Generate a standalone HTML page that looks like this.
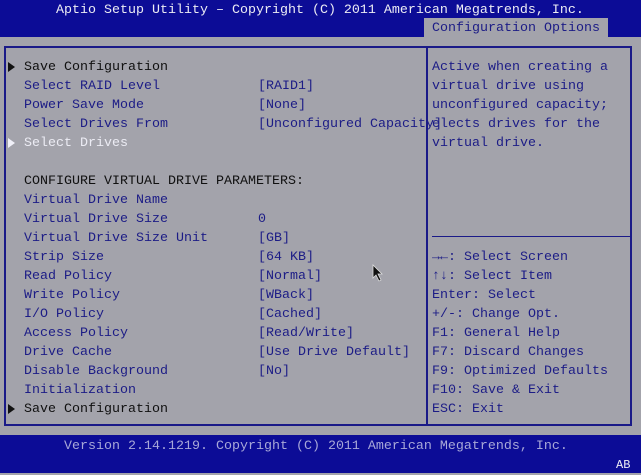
<!DOCTYPE html>
<html><head><meta charset="utf-8"><style>
html,body{margin:0;padding:0}
body{width:641px;height:473px;position:relative;overflow:hidden;background:#a3a3ab;font-family:"Liberation Mono","DejaVu Sans Mono",monospace;font-size:13.33px;}
.t{position:absolute;white-space:pre;line-height:19px;height:19px;margin-top:1px}
.b{color:#1c1c86}.k{color:#101010}.w{color:#ececf4}
#top{position:absolute;left:0;top:0;width:641px;height:37px;background:#0c0c96}
#bot{position:absolute;left:0;top:435px;width:641px;height:38px;background:#0c0c96}
#tab{position:absolute;left:424px;top:18px;width:184px;height:19px;background:#a3a3ab}
.ln{position:absolute;background:#1a1a88}
.tri{position:absolute;width:0;height:0;border-top:5px solid transparent;border-bottom:5px solid transparent;border-left:7px solid #111}
</style></head><body>
<div id="top"></div>
<div class="t w" style="left:56px;top:0px">Aptio Setup Utility – Copyright (C) 2011 American Megatrends, Inc.</div>
<div id="tab"></div>
<div class="t b" style="left:432px;top:18px">Configuration Options</div>

<div class="ln" style="left:4px;top:46px;width:628px;height:2px"></div>
<div class="ln" style="left:4px;top:424px;width:628px;height:2px"></div>
<div class="ln" style="left:4px;top:46px;width:2px;height:380px"></div>
<div class="ln" style="left:426px;top:46px;width:2px;height:380px"></div>
<div class="ln" style="left:630px;top:46px;width:2px;height:380px"></div>
<div class="ln" style="left:432px;top:236px;width:198px;height:1px"></div>

<div class="tri" style="left:8px;top:62px"></div>
<div class="t k" style="left:24px;top:57px">Save Configuration</div>
<div class="t b" style="left:24px;top:76px">Select RAID Level</div>
<div class="t b" style="left:258px;top:76px">[RAID1]</div>
<div class="t b" style="left:24px;top:95px">Power Save Mode</div>
<div class="t b" style="left:258px;top:95px">[None]</div>
<div class="t b" style="left:24px;top:114px">Select Drives From</div>
<div class="t b" style="left:258px;top:114px">[Unconfigured Capacity]</div>
<div class="tri" style="left:8px;top:138px;border-left-color:#f0f0f8"></div>
<div class="t w" style="left:24px;top:133px">Select Drives</div>
<div class="t k" style="left:24px;top:171px">CONFIGURE VIRTUAL DRIVE PARAMETERS:</div>
<div class="t b" style="left:24px;top:190px">Virtual Drive Name</div>
<div class="t b" style="left:24px;top:209px">Virtual Drive Size</div>
<div class="t b" style="left:258px;top:209px">0</div>
<div class="t b" style="left:24px;top:228px">Virtual Drive Size Unit</div>
<div class="t b" style="left:258px;top:228px">[GB]</div>
<div class="t b" style="left:24px;top:247px">Strip Size</div>
<div class="t b" style="left:258px;top:247px">[64 KB]</div>
<div class="t b" style="left:24px;top:266px">Read Policy</div>
<div class="t b" style="left:258px;top:266px">[Normal]</div>
<div class="t b" style="left:24px;top:285px">Write Policy</div>
<div class="t b" style="left:258px;top:285px">[WBack]</div>
<div class="t b" style="left:24px;top:304px">I/O Policy</div>
<div class="t b" style="left:258px;top:304px">[Cached]</div>
<div class="t b" style="left:24px;top:323px">Access Policy</div>
<div class="t b" style="left:258px;top:323px">[Read/Write]</div>
<div class="t b" style="left:24px;top:342px">Drive Cache</div>
<div class="t b" style="left:258px;top:342px">[Use Drive Default]</div>
<div class="t b" style="left:24px;top:361px">Disable Background</div>
<div class="t b" style="left:258px;top:361px">[No]</div>
<div class="t b" style="left:24px;top:380px">Initialization</div>
<div class="tri" style="left:8px;top:404px"></div>
<div class="t k" style="left:24px;top:399px">Save Configuration</div>

<div class="t b" style="left:432px;top:57px">Active when creating a</div>
<div class="t b" style="left:432px;top:76px">virtual drive using</div>
<div class="t b" style="left:432px;top:95px">unconfigured capacity;</div>
<div class="t b" style="left:432px;top:114px">elects drives for the</div>
<div class="t b" style="left:432px;top:133px">virtual drive.</div>

<div class="t b" style="left:432px;top:247px"><b>→←</b>: Select Screen</div>
<div class="t b" style="left:432px;top:266px"><b>↑↓</b>: Select Item</div>
<div class="t b" style="left:432px;top:285px">Enter: Select</div>
<div class="t b" style="left:432px;top:304px">+/-: Change Opt.</div>
<div class="t b" style="left:432px;top:323px">F1: General Help</div>
<div class="t b" style="left:432px;top:342px">F7: Discard Changes</div>
<div class="t b" style="left:432px;top:361px">F9: Optimized Defaults</div>
<div class="t b" style="left:432px;top:380px">F10: Save &amp; Exit</div>
<div class="t b" style="left:432px;top:399px">ESC: Exit</div>

<svg style="position:absolute;left:372px;top:264px" width="12" height="18"><path d="M1 1 L1 14 L4 11 L7 17 L9 16 L6 10 L10 10 Z" fill="#111" stroke="#ddd" stroke-width="0.8"/></svg>

<div id="bot"></div>
<div class="t" style="left:64px;top:436px;color:#a8a8d8">Version 2.14.1219. Copyright (C) 2011 American Megatrends, Inc.</div>
<div class="t w" style="left:616px;top:455px;font-size:12px">AB</div>
</body></html>
